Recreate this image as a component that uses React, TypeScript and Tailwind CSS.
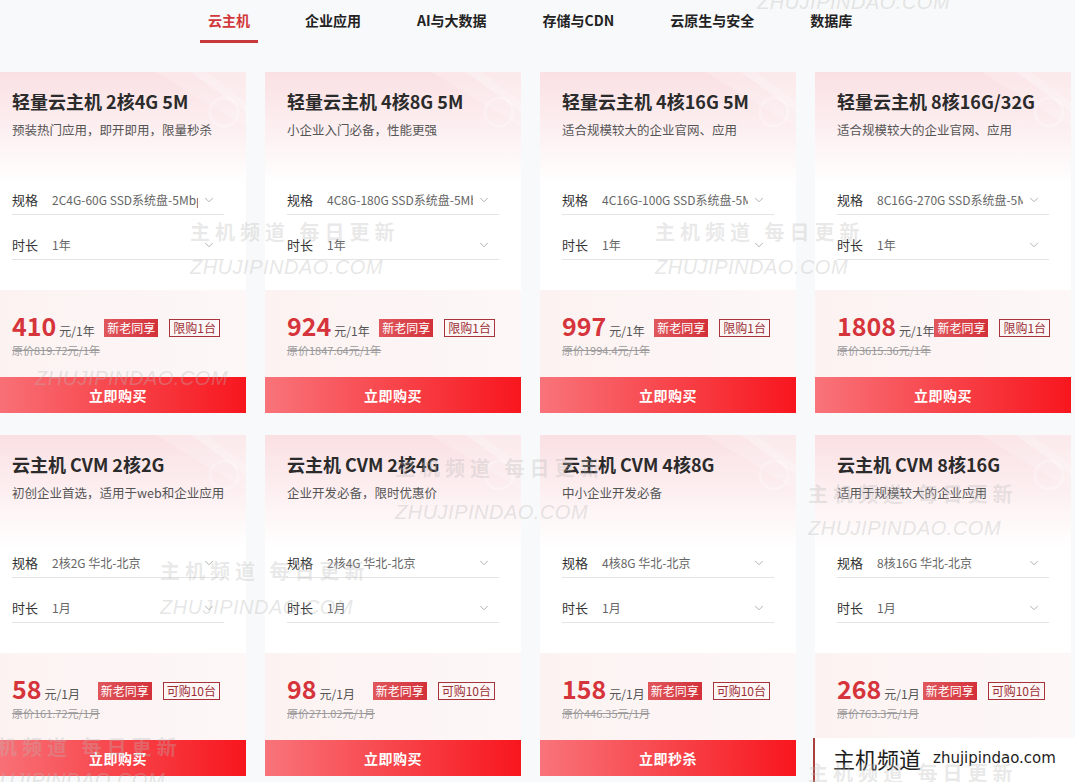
import { ChevronDown } from 'lucide-react'

interface Plan {
  title: string
  desc: string
  spec: string
  term: string
  price: string
  unit: string
  limit: string
  original: string
  action: string
}

const tabs = ['云主机', '企业应用', 'AI与大数据', '存储与CDN', '云原生与安全', '数据库']

const plans: Plan[] = [
  {
    title: '轻量云主机 2核4G 5M',
    desc: '预装热门应用，即开即用，限量秒杀',
    spec: '2C4G-60G SSD系统盘-5Mbps',
    term: '1年',
    price: '410',
    unit: '元/1年',
    limit: '限购1台',
    original: '原价819.72元/1年',
    action: '立即购买',
  },
  {
    title: '轻量云主机 4核8G 5M',
    desc: '小企业入门必备，性能更强',
    spec: '4C8G-180G SSD系统盘-5Mbps',
    term: '1年',
    price: '924',
    unit: '元/1年',
    limit: '限购1台',
    original: '原价1847.64元/1年',
    action: '立即购买',
  },
  {
    title: '轻量云主机 4核16G 5M',
    desc: '适合规模较大的企业官网、应用',
    spec: '4C16G-100G SSD系统盘-5Mbps',
    term: '1年',
    price: '997',
    unit: '元/1年',
    limit: '限购1台',
    original: '原价1994.4元/1年',
    action: '立即购买',
  },
  {
    title: '轻量云主机 8核16G/32G',
    desc: '适合规模较大的企业官网、应用',
    spec: '8C16G-270G SSD系统盘-5Mbps',
    term: '1年',
    price: '1808',
    unit: '元/1年',
    limit: '限购1台',
    original: '原价3615.36元/1年',
    action: '立即购买',
  },
  {
    title: '云主机 CVM 2核2G',
    desc: '初创企业首选，适用于web和企业应用',
    spec: '2核2G 华北-北京',
    term: '1月',
    price: '58',
    unit: '元/1月',
    limit: '可购10台',
    original: '原价161.72元/1月',
    action: '立即购买',
  },
  {
    title: '云主机 CVM 2核4G',
    desc: '企业开发必备，限时优惠价',
    spec: '2核4G 华北-北京',
    term: '1月',
    price: '98',
    unit: '元/1月',
    limit: '可购10台',
    original: '原价271.02元/1月',
    action: '立即购买',
  },
  {
    title: '云主机 CVM 4核8G',
    desc: '中小企业开发必备',
    spec: '4核8G 华北-北京',
    term: '1月',
    price: '158',
    unit: '元/1月',
    limit: '可购10台',
    original: '原价446.35元/1月',
    action: '立即秒杀',
  },
  {
    title: '云主机 CVM 8核16G',
    desc: '适用于规模较大的企业应用',
    spec: '8核16G 华北-北京',
    term: '1月',
    price: '268',
    unit: '元/1月',
    limit: '可购10台',
    original: '原价763.3元/1月',
    action: '立即购买',
  },
]

// faint site watermarks laid over the page
const cnMarks = [
  [190, 219],
  [655, 219],
  [395, 455],
  [808, 481],
  [160, 558],
  [-28, 734],
  [808, 760],
]
const enMarks = [
  [757, -10],
  [190, 255],
  [655, 255],
  [35, 366],
  [395, 500],
  [808, 516],
  [160, 595],
  [-28, 768],
]

function SelectRow({ label, value }: { label: string; value: string }) {
  return (
    <div className="flex h-[30px] items-center border-b border-[#e3e3e3]">
      <span className="shrink-0 text-[13px] text-[#333]">{label}</span>
      <span className="ml-[14px] flex-1 overflow-hidden whitespace-nowrap text-[12px] text-[#666]">
        {value}
      </span>
      <ChevronDown size={14} strokeWidth={1.3} className="ml-[4px] mr-[8px] shrink-0 text-[#9a9a9a]" />
    </div>
  )
}

function PlanCard({ plan }: { plan: Plan }) {
  return (
    <div className="flex h-[341px] flex-col overflow-hidden bg-white">
      {/* header with pink wash */}
      <div className="relative h-[113px] bg-[linear-gradient(180deg,#fae0e3_0%,#fcecee_40%,#ffffff_100%)] px-[22px] pt-[17px]">
        <svg className="absolute right-0 top-0" width="150" height="100" viewBox="0 0 150 100">
          <polygon points="20,0 150,0 150,40 95,0" fill="#ffffff" opacity="0.3" />
          <polygon points="60,0 110,0 150,30 150,55" fill="#ffffff" opacity="0.2" />
          <circle cx="128" cy="40" r="14" fill="none" stroke="#ffffff" strokeWidth="3" opacity="0.25" />
        </svg>
        <h3 className="relative whitespace-nowrap text-[18px] font-bold leading-[24px] text-[#2b2b2b]">{plan.title}</h3>
        <p className="relative mt-[8px] whitespace-nowrap text-[12.5px] leading-[18px] text-[#555]">{plan.desc}</p>
      </div>

      <div className="flex flex-col gap-[15px] px-[22px]">
        <SelectRow label="规格" value={plan.spec} />
        <SelectRow label="时长" value={plan.term} />
      </div>

      <div className="mt-[30px] h-[87px] bg-[linear-gradient(90deg,#fcf2f2,#fdf7f7)] pl-[22px] pr-[26px] pt-[20px]">
        <div className="flex items-center justify-between">
          <div className="flex shrink-0 items-baseline whitespace-nowrap">
            <span className="text-[25px] font-bold leading-[30px] text-[#d6343b]">{plan.price}</span>
            <span className="ml-[3px] text-[12px] text-[#555]">{plan.unit}</span>
          </div>
          <div className="mt-[6px] flex shrink-0 items-center gap-[11px] whitespace-nowrap">
            <span className="h-[18px] bg-[linear-gradient(90deg,#e0575c,#d3313a)] px-[3px] text-[12px] leading-[18px] text-white">
              新老同享
            </span>
            <span className="h-[18px] border border-[#a8343b] px-[3px] text-[12px] leading-[16px] text-[#9b2f35]">
              {plan.limit}
            </span>
          </div>
        </div>
        <div className="mt-[2px] text-[11px] leading-[16px] text-[#9a9a9a] line-through">{plan.original}</div>
      </div>

      <button className="h-[36px] w-full bg-[linear-gradient(90deg,#f8747a_0%,#f7454b_50%,#f8161e_100%)] text-[14px] font-bold tracking-[0.5px] text-white">
        {plan.action}
      </button>
    </div>
  )
}

export default function App() {
  return (
    <div className="relative h-[782px] w-[1075px] overflow-hidden bg-[#f8f9fa] font-['Noto_Sans_CJK_SC',sans-serif]">
      <nav className="flex h-[72px] gap-[38px] pl-[200px]">
        {tabs.map((t, i) => (
          <div
            key={t}
            className={
              i === 0
                ? 'h-[43px] border-b-[3px] border-[#c8393c] px-[8px] pt-[11px] text-[14px] font-bold leading-[18px] text-[#d2373b]'
                : 'h-[43px] px-[9px] pt-[11px] text-[14px] font-bold leading-[18px] text-[#222]'
            }
          >
            {t}
          </div>
        ))}
      </nav>

      <div className="-ml-[10px] grid grid-cols-[repeat(4,256px)] gap-x-[19px] gap-y-[22px]">
        {plans.map((p) => (
          <PlanCard key={p.title} plan={p} />
        ))}
      </div>

      {/* site logo stamp */}
      <div className="absolute bottom-0 left-[813px] right-0 top-[738px] flex items-center gap-[12px] border-l-2 border-[#a9423f] bg-white pb-[4px] pl-[18px]">
        <span className="text-[22px] leading-[28px] text-[#1d1d1d]">主机频道</span>
        <span className="font-['DejaVu_Sans',sans-serif] text-[15px] leading-[20px] text-[#1d1d1d]">zhujipindao.com</span>
      </div>

      {/* watermarks */}
      <div className="pointer-events-none absolute inset-0">
        {cnMarks.map(([x, y]) => (
          <div
            key={`c${x}-${y}`}
            className="absolute whitespace-nowrap text-[20px] font-bold leading-[26px] tracking-[5px] text-[rgba(185,185,185,0.32)]"
            style={{ left: x, top: y }}
          >
            主机频道 每日更新
          </div>
        ))}
        {enMarks.map(([x, y]) => (
          <div
            key={`e${x}-${y}`}
            className="absolute whitespace-nowrap font-['Liberation_Sans',sans-serif] text-[20px] italic leading-[24px] tracking-[0.5px] text-[rgba(185,185,185,0.35)]"
            style={{ left: x, top: y }}
          >
            ZHUJIPINDAO.COM
          </div>
        ))}
      </div>
    </div>
  )
}
